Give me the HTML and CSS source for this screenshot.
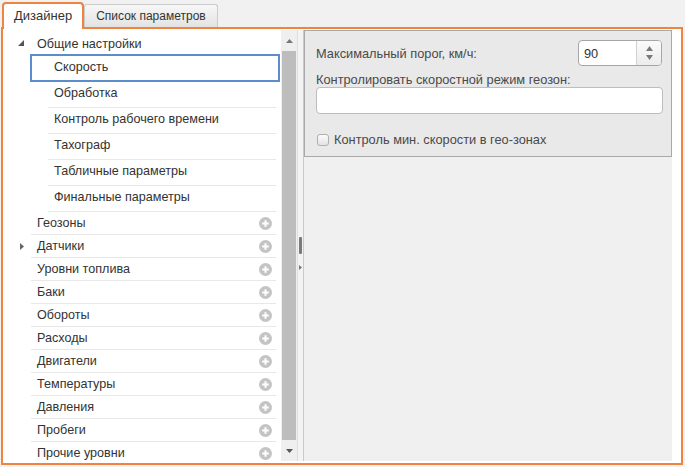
FILE: index.html
```html
<!DOCTYPE html>
<html lang="ru">
<head>
<meta charset="utf-8">
<title>Дизайнер</title>
<link rel="stylesheet" href="styles.css">
</head>
<body>
<div class="app">
  <div class="tabbar">
    <div class="tab tab-active">Дизайнер</div>
    <div class="tab tab-inactive">Список параметров</div>
  </div>
  <div class="frame">
    <div class="tree">
      <div class="node-line">
        <span class="toggle"><svg width="6" height="6" viewBox="0 0 6 6"><polygon points="6,0 6,6 0,6" fill="#555"/></svg></span>
        <div class="node node-open">Общие настройки</div>
      </div>
      <div class="child child-selected">Скорость</div>
      <div class="child">Обработка</div>
      <div class="child">Контроль рабочего времени</div>
      <div class="child">Тахограф</div>
      <div class="child">Табличные параметры</div>
      <div class="child">Финальные параметры</div>

      <div class="node-line"><span class="toggle"></span><div class="node"><span class="label">Геозоны</span><svg class="plus" width="13" height="13" viewBox="0 0 13 13"><circle cx="6.5" cy="6.5" r="6.5" fill="#c4c4c4"/><path d="M3.2 6.5h6.6M6.5 3.2v6.6" stroke="#fff" stroke-width="2"/></svg></div></div>
      <div class="node-line"><span class="toggle"><svg width="4" height="7" viewBox="0 0 4 7"><polygon points="0,0 4,3.5 0,7" fill="#666"/></svg></span><div class="node"><span class="label">Датчики</span><svg class="plus" width="13" height="13" viewBox="0 0 13 13"><circle cx="6.5" cy="6.5" r="6.5" fill="#c4c4c4"/><path d="M3.2 6.5h6.6M6.5 3.2v6.6" stroke="#fff" stroke-width="2"/></svg></div></div>
      <div class="node-line"><span class="toggle"></span><div class="node"><span class="label">Уровни топлива</span><svg class="plus" width="13" height="13" viewBox="0 0 13 13"><circle cx="6.5" cy="6.5" r="6.5" fill="#c4c4c4"/><path d="M3.2 6.5h6.6M6.5 3.2v6.6" stroke="#fff" stroke-width="2"/></svg></div></div>
      <div class="node-line"><span class="toggle"></span><div class="node"><span class="label">Баки</span><svg class="plus" width="13" height="13" viewBox="0 0 13 13"><circle cx="6.5" cy="6.5" r="6.5" fill="#c4c4c4"/><path d="M3.2 6.5h6.6M6.5 3.2v6.6" stroke="#fff" stroke-width="2"/></svg></div></div>
      <div class="node-line"><span class="toggle"></span><div class="node"><span class="label">Обороты</span><svg class="plus" width="13" height="13" viewBox="0 0 13 13"><circle cx="6.5" cy="6.5" r="6.5" fill="#c4c4c4"/><path d="M3.2 6.5h6.6M6.5 3.2v6.6" stroke="#fff" stroke-width="2"/></svg></div></div>
      <div class="node-line"><span class="toggle"></span><div class="node"><span class="label">Расходы</span><svg class="plus" width="13" height="13" viewBox="0 0 13 13"><circle cx="6.5" cy="6.5" r="6.5" fill="#c4c4c4"/><path d="M3.2 6.5h6.6M6.5 3.2v6.6" stroke="#fff" stroke-width="2"/></svg></div></div>
      <div class="node-line"><span class="toggle"></span><div class="node"><span class="label">Двигатели</span><svg class="plus" width="13" height="13" viewBox="0 0 13 13"><circle cx="6.5" cy="6.5" r="6.5" fill="#c4c4c4"/><path d="M3.2 6.5h6.6M6.5 3.2v6.6" stroke="#fff" stroke-width="2"/></svg></div></div>
      <div class="node-line"><span class="toggle"></span><div class="node"><span class="label">Температуры</span><svg class="plus" width="13" height="13" viewBox="0 0 13 13"><circle cx="6.5" cy="6.5" r="6.5" fill="#c4c4c4"/><path d="M3.2 6.5h6.6M6.5 3.2v6.6" stroke="#fff" stroke-width="2"/></svg></div></div>
      <div class="node-line"><span class="toggle"></span><div class="node"><span class="label">Давления</span><svg class="plus" width="13" height="13" viewBox="0 0 13 13"><circle cx="6.5" cy="6.5" r="6.5" fill="#c4c4c4"/><path d="M3.2 6.5h6.6M6.5 3.2v6.6" stroke="#fff" stroke-width="2"/></svg></div></div>
      <div class="node-line"><span class="toggle"></span><div class="node"><span class="label">Пробеги</span><svg class="plus" width="13" height="13" viewBox="0 0 13 13"><circle cx="6.5" cy="6.5" r="6.5" fill="#c4c4c4"/><path d="M3.2 6.5h6.6M6.5 3.2v6.6" stroke="#fff" stroke-width="2"/></svg></div></div>
      <div class="node-line"><span class="toggle"></span><div class="node"><span class="label">Прочие уровни</span><svg class="plus" width="13" height="13" viewBox="0 0 13 13"><circle cx="6.5" cy="6.5" r="6.5" fill="#c4c4c4"/><path d="M3.2 6.5h6.6M6.5 3.2v6.6" stroke="#fff" stroke-width="2"/></svg></div></div>
    </div>

    <div class="side">
      <div class="scrollbar">
        <div class="scroll-arrow"><svg width="7" height="4" viewBox="0 0 7 4"><polygon points="0,4 3.5,0 7,4" fill="#777"/></svg></div>
        <div class="scroll-thumb"></div>
        <div class="scroll-arrow"><svg width="7" height="4" viewBox="0 0 7 4"><polygon points="0,0 7,0 3.5,4" fill="#555"/></svg></div>
      </div>
      <div class="splitter">
        <div class="grip"></div>
        <svg class="grip-arrow" width="3" height="5" viewBox="0 0 3 5"><polygon points="0,0 3,2.5 0,5" fill="#777"/></svg>
      </div>
      <div class="pane">
        <div class="fieldset">
          <div class="field-row">
            <span class="lbl">Максимальный порог, км/ч:</span>
            <div class="spinner">
              <span class="spin-value">90</span>
              <div class="spin-btns">
                <svg width="7" height="5" viewBox="0 0 7 5"><polygon points="0,5 3.5,0 7,5" fill="#7a7a7a"/></svg>
                <svg width="7" height="5" viewBox="0 0 7 5"><polygon points="0,0 7,0 3.5,5" fill="#7a7a7a"/></svg>
              </div>
            </div>
          </div>
          <div class="lbl lbl-block">Контролировать скоростной режим геозон:</div>
          <div class="textbox"></div>
          <div class="check-row">
            <span class="checkbox"></span>
            <span class="lbl">Контроль мин. скорости в гео-зонах</span>
          </div>
        </div>
      </div>
    </div>
  </div>
</div>
</body>
</html>
```
FILE: styles.css
```css
* { box-sizing: border-box; }
html, body { margin: 0; padding: 0; }
body {
  background: #f1f1f1;
  font-family: "Liberation Sans", Arial, sans-serif;
  font-size: 12px;
  color: #333;
}
.app { width: 685px; height: 467px; overflow: hidden; }

.tabbar {
  height: 27px;
  display: flex;
  align-items: flex-end;
  padding-left: 2px;
}
.tab {
  display: flex;
  align-items: center;
  white-space: nowrap;
  color: #333;
}
.tab-active {
  position: relative;
  z-index: 1;
  height: 27px;
  margin-bottom: -2px;
  padding: 0 10px 2px 10px;
  font-size: 13px;
  background: #fff;
  border: 2px solid #ef8340;
  border-bottom: 0;
  border-radius: 4px 4px 0 0;
}
.tab-inactive {
  height: 23px;
  padding: 0 11px;
  background: linear-gradient(#f7f7f7, #e3e3e3);
  border: 1px solid #cbcbcb;
  border-bottom: 0;
  border-radius: 3px 3px 0 0;
}

.frame {
  margin-left: 1px;
  width: 682px;
  height: 438px;
  border: 2px solid #ef8340;
  background: #fff;
  display: flex;
  overflow: hidden;
}

.tree {
  width: 278px;
  flex: none;
  padding-top: 2px;
  font-size: 12.6px;
}
.node-line { display: flex; }
.toggle {
  width: 28px;
  flex: none;
  display: flex;
  align-items: center;
  justify-content: flex-end;
  padding-right: 7px;
}
.node {
  flex: 1;
  margin-right: 5px;
  height: 23px;
  padding: 0 4px 0 6px;
  display: flex;
  align-items: center;
  justify-content: space-between;
  border-bottom: 1px solid #e8e8e8;
}
.node-open { border-bottom: 0; padding-top: 3px; }
.child {
  margin: 0 5px 0 45px;
  height: 26px;
  padding: 0 0 3px 6px;
  display: flex;
  align-items: center;
  border-bottom: 1px solid #e8e8e8;
}
.child-selected {
  margin: 0 1px 0 27px;
  height: 28px;
  padding: 0 0 2px 22px;
  border: 2px solid #5b8dca;
}
.plus { flex: none; }

.side {
  flex: 1;
  display: flex;
  padding: 1px 9px 2px 0;
}
.scrollbar {
  width: 16px;
  flex: none;
  background: #efefef;
  display: flex;
  flex-direction: column;
  align-items: center;
}
.scroll-arrow {
  height: 21px;
  display: flex;
  align-items: center;
  justify-content: center;
}
.scroll-thumb {
  width: 14px;
  flex: 1;
  background: #bdbdbd;
}
.splitter {
  width: 7px;
  flex: none;
  background: #f3f3f3;
  border-left: 1px solid #dddddd;
  border-right: 1px solid #c9c9c9;
  display: flex;
  flex-direction: column;
  align-items: center;
  padding-top: 207px;
}
.grip {
  width: 3px;
  height: 17px;
  background: #7a7a7a;
  border-radius: 1px;
}
.grip-arrow { margin-top: 11px; }

.pane {
  flex: 1;
  background: #f0f0f0;
}
.fieldset {
  background: #e9e9e9;
  border: 1px solid #a9a9a9;
  height: 127px;
  padding: 9px 9px 0 11px;
  font-size: 12.8px;
}
.lbl { color: #4a4a4a; white-space: nowrap; }
.field-row {
  display: flex;
  align-items: center;
  justify-content: space-between;
}
.spinner {
  width: 84px;
  height: 26px;
  background: #fff;
  border: 1px solid #a6a6a6;
  border-radius: 4px;
  display: flex;
  overflow: hidden;
}
.spin-value {
  flex: 1;
  padding-left: 5px;
  display: flex;
  align-items: center;
  color: #333;
}
.spin-btns {
  width: 25px;
  border-left: 1px solid #d0d0d0;
  background: linear-gradient(#fbfbfb, #ececec);
  display: flex;
  flex-direction: column;
  align-items: center;
  justify-content: center;
  gap: 4px;
}
.lbl-block {
  display: block;
  margin-top: 6px;
  line-height: 15px;
}
.textbox {
  height: 27px;
  margin-right: -1px;
  background: #fff;
  border: 1px solid #bdbdbd;
  border-radius: 4px;
}
.check-row {
  margin-top: 19px;
  display: flex;
  align-items: center;
  height: 13px;
}
.checkbox {
  width: 12px;
  height: 12px;
  margin-left: 1px;
  margin-right: 5px;
  border: 1px solid #b0b0b0;
  border-radius: 3px;
  background: linear-gradient(#fbfbfb, #e3e3e3);
}
```
